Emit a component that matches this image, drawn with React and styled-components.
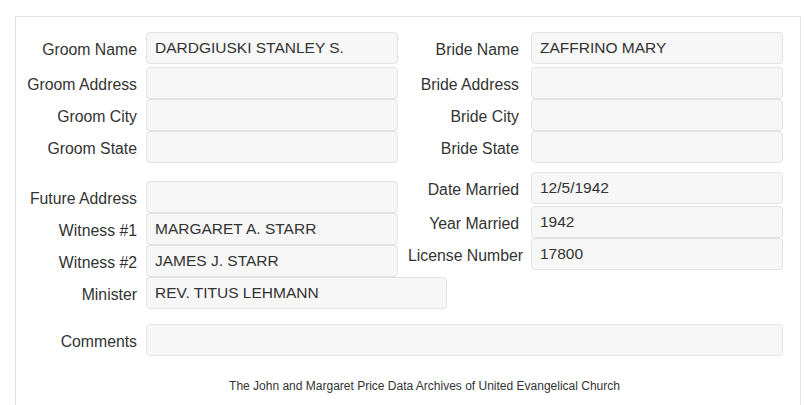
import React from 'react';
import styled, { createGlobalStyle } from 'styled-components';

const GlobalStyle = createGlobalStyle`
  html, body {
    margin: 0;
    padding: 0;
    background: #fff;
  }
  body {
    font-family: "Liberation Sans", Arial, sans-serif;
    color: #333;
  }
`;

const Page = styled.div`
  padding: 16px 0 0 15px;
`;

const Panel = styled.div`
  width: 786px;
  border: 1px solid #e4e4e4;
  border-bottom: none;
  padding: 15px 0 20px 0;
  min-height: 400px;
  box-sizing: border-box;
`;

const Section = styled.div`
  display: flex;
  align-items: flex-start;
  margin-top: ${p => p.$top || 0}px;
`;

const Half = styled.div`
  display: grid;
  grid-template-columns: ${p => p.$label || 121}px 252px;
  column-gap: ${p => p.$gap}px;
  width: ${p => p.$width}px;
  box-sizing: border-box;
  padding-left: ${p => p.$indent || 0}px;
  margin-top: ${p => p.$top || 0}px;
`;

const Row = styled.div`
  display: contents;
`;

const Label = styled.label`
  grid-column: 1;
  text-align: right;
  font-size: 15.8px;
  line-height: 32px;
  height: 32px;
  padding-top: 2px;
  box-sizing: border-box;
  white-space: nowrap;
  margin-bottom: ${p => p.$after || 0}px;
`;

const Field = styled.div`
  grid-column: 2;
  height: 32px;
  width: ${p => p.$width || 252}px;
  box-sizing: border-box;
  background: #f7f7f7;
  border: 1px solid #e3e3e3;
  border-radius: 4px;
  padding: 0 8px;
  font-size: 15.5px;
  line-height: 30px;
  color: #333;
  white-space: nowrap;
  margin-bottom: ${p => p.$after || 0}px;
`;

const Footer = styled.div`
  text-align: center;
  font-size: 12px;
  line-height: 16px;
  margin-top: 22px;
  padding-left: 33px;
`;

const groom = [
  ['Groom Name', 'DARDGIUSKI STANLEY S.', 3],
  ['Groom Address', '', 0],
  ['Groom City', '', 0],
  ['Groom State', '', 0],
];

const bride = [
  ['Bride Name', 'ZAFFRINO MARY', 3],
  ['Bride Address', '', 0],
  ['Bride City', '', 0],
  ['Bride State', '', 0],
];

const people = [
  ['Future Address', '', 0],
  ['Witness #1', 'MARGARET A. STARR', 0],
  ['Witness #2', 'JAMES J. STARR', 0],
  ['Minister', 'REV. TITUS LEHMANN', 0, 301],
];

const marriage = [
  ['Date Married', '12/5/1942', 2],
  ['Year Married', '1942', 0],
  ['License Number', '17800', 0],
];

const Fields = ({ rows }) =>
  rows.map(([label, value, after, width]) => (
    <Row key={label}>
      <Label $after={after}>{label}</Label>
      <Field $after={after} $width={width}>{value}</Field>
    </Row>
  ));

const App = () => (
  <Page>
    <GlobalStyle />
    <Panel>
      <Section>
        <Half $gap={9} $width={382}>
          <Fields rows={groom} />
        </Half>
        <Half $gap={12} $width={385} $indent={10} $label={111}>
          <Fields rows={bride} />
        </Half>
      </Section>

      <Section $top={9}>
        <Half $gap={9} $width={382} $top={9}>
          <Fields rows={people} />
        </Half>
        <Half $gap={12} $width={385} $indent={10} $label={111}>
          <Fields rows={marriage} />
        </Half>
      </Section>

      <Section $top={15}>
        <Half $gap={9} $width={782}>
          <Label>Comments</Label>
          <Field $width={637} />
        </Half>
      </Section>

      <Footer>The John and Margaret Price Data Archives of United Evangelical Church</Footer>
    </Panel>
  </Page>
);

export default App;
